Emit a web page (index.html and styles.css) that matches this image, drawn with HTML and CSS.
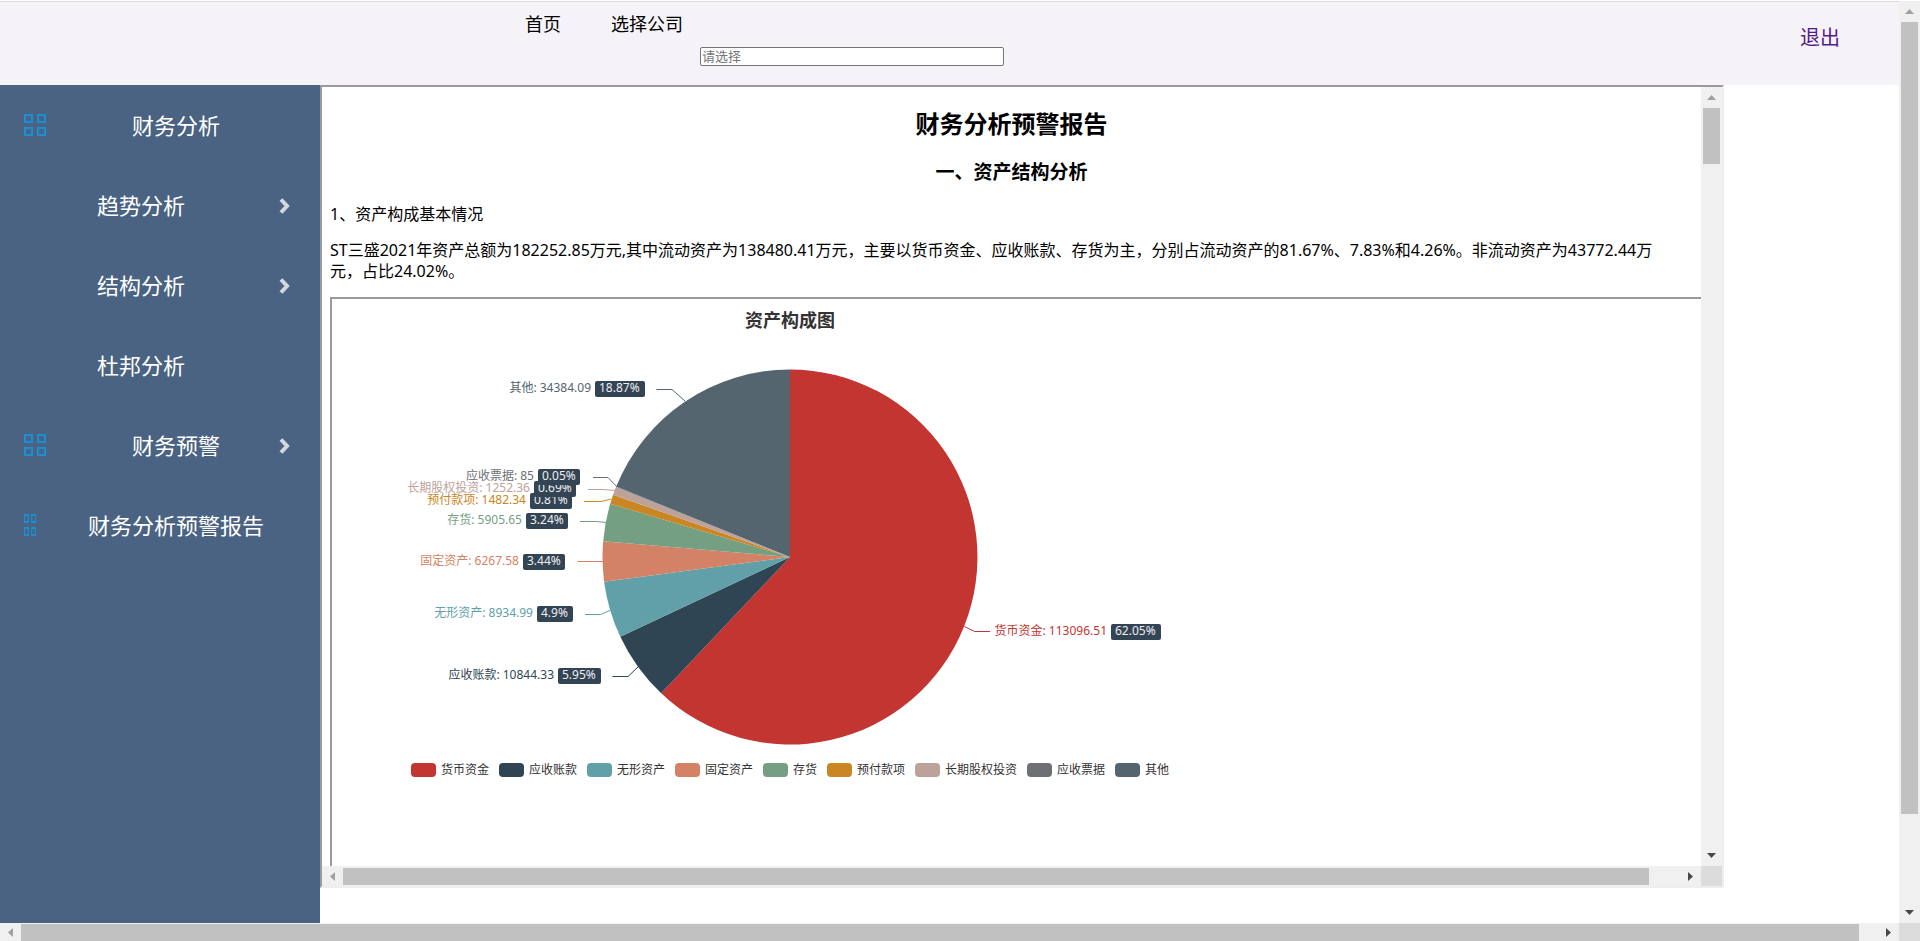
FILE: index.html
```html
<!DOCTYPE html>
<html lang="zh-CN">
<head>
<meta charset="utf-8">
<title>财务分析预警报告</title>
<link rel="stylesheet" href="styles.css">
</head>
<body>
<svg class="defs" aria-hidden="true">
  <symbol id="grid" viewBox="0 0 22 22" preserveAspectRatio="none">
    <path d="M1 1h7v7H1zM14 1h7v7h-7zM1 14h7v7H1zM14 14h7v7h-7z" fill="none" stroke="#1c8fd3" stroke-width="2"/>
  </symbol>
  <symbol id="chevron" viewBox="0 0 11 16">
    <path d="M2 2l6 6.500-6 6.500" fill="none" stroke="#d3d8de" stroke-width="4"/>
  </symbol>
  <symbol id="tri" viewBox="0 0 9 5"><path d="M0 5L4.500 0L9 5z" fill="currentColor"/></symbol>
</svg>
<div class="window">
  <div class="page">
    <header class="header">
      <div class="header-main">
        <nav class="nav"><a href="#home">首页</a><a href="#company">选择公司</a></nav>
        <input class="company" type="text" placeholder="请选择" aria-label="选择公司">
      </div>
      <a class="logout" href="#logout">退出</a>
    </header>
    <div class="body">
      <nav class="sidebar">
        <a class="item" href="#analysis"><svg class="icon"><use href="#grid"/></svg><span class="label">财务分析</span></a>
        <a class="item sub" href="#trend"><span class="label">趋势分析</span><svg class="chevron"><use href="#chevron"/></svg></a>
        <a class="item sub" href="#structure"><span class="label">结构分析</span><svg class="chevron"><use href="#chevron"/></svg></a>
        <a class="item sub" href="#dupont"><span class="label">杜邦分析</span></a>
        <a class="item" href="#warning"><svg class="icon"><use href="#grid"/></svg><span class="label">财务预警</span><svg class="chevron"><use href="#chevron"/></svg></a>
        <a class="item" href="#report"><svg class="icon narrow"><use href="#grid"/></svg><span class="label">财务分析预警报告</span></a>
      </nav>
      <main class="frame">
        <article class="report">
          <h1>财务分析预警报告</h1>
          <h2>一、资产结构分析</h2>
          <p>1、资产构成基本情况</p>
          <p>ST三盛2021年资产总额为182252.85万元,其中流动资产为138480.41万元，主要以货币资金、应收账款、存货为主，分别占流动资产的81.67%、7.83%和4.26%。非流动资产为43772.44万元，占比24.02%。</p>
          <section class="chart-frame">
            <div class="chart">
              <h3>资产构成图</h3>
              <svg class="pie" viewBox="0 0 916 410" role="img" aria-label="资产构成图">
                <path fill="#c23531" d="M458 208V20.500A187.500 187.500 0 1 1 329.200 344.300z"/>
                <path fill="#2f4554" d="M458 208L329.200 344.300A187.500 187.500 0 0 1 288.300 287.800z"/>
                <path fill="#61a0a8" d="M458 208L288.300 287.800A187.500 187.500 0 0 1 272.100 232.700z"/>
                <path fill="#d48265" d="M458 208L272.100 232.700A187.500 187.500 0 0 1 271.200 192.200z"/>
                <path fill="#749f83" d="M458 208L271.200 192.200A187.500 187.500 0 0 1 278.200 154.800z"/>
                <path fill="#ca8622" d="M458 208L278.200 154.800A187.500 187.500 0 0 1 281.100 145.700z"/>
                <path fill="#bda29a" d="M458 208L281.100 145.700A187.500 187.500 0 0 1 284 138.100z"/>
                <path fill="#6e7074" d="M458 208L284 138.100A187.500 187.500 0 0 1 284.200 137.600z"/>
                <path fill="#546570" d="M458 208L284.200 137.600A187.500 187.500 0 0 1 458 20.500z"/>
                <g class="lines">
                  <path stroke="#c23531" d="M632.500 277.500L642.500 282.500H658"/>
                  <path stroke="#2f4554" d="M280.500 327.500H296L306 318"/>
                  <path stroke="#61a0a8" d="M253 265.500H268.500L278 261.500"/>
                  <path stroke="#d48265" d="M245.500 212.500H271"/>
                  <path stroke="#749f83" d="M248 172.500H264L274 173.500"/>
                  <path stroke="#ca8622" d="M252 152.500H269L279 150"/>
                  <path stroke="#bda29a" d="M256 140.500H271L283 141.500"/>
                  <path stroke="#6e7074" d="M261 128.500H276L285 138"/>
                  <path stroke="#546570" d="M324.500 40.500H340L353 52"/>
                </g>
                <g class="badges">
                  <rect x="779" y="275" width="50" height="16" rx="2"/><text x="783" y="286">62.05%</text>
                  <rect x="226" y="319" width="43" height="16" rx="2"/><text x="230" y="330">5.95%</text>
                  <rect x="205" y="257" width="36" height="16" rx="2"/><text x="209" y="268">4.9%</text>
                  <rect x="191" y="205" width="42" height="16" rx="2"/><text x="195" y="216">3.44%</text>
                  <rect x="194" y="164" width="42" height="16" rx="2"/><text x="198" y="175">3.24%</text>
                  <rect x="198" y="144" width="42" height="16" rx="2"/><text x="202" y="155">0.81%</text>
                  <rect x="202" y="132" width="42" height="16" rx="2"/><text x="206" y="143">0.69%</text>
                  <rect x="206" y="120" width="42" height="16" rx="2"/><text x="210" y="131">0.05%</text>
                  <rect x="263" y="32" width="50" height="16" rx="2"/><text x="267" y="43">18.87%</text>
                </g>
                <g class="names">
                  <text fill="#c23531" x="775" y="286">货币资金: 113096.51</text>
                  <text fill="#2f4554" x="222" y="330">应收账款: 10844.33</text>
                  <text fill="#61a0a8" x="201" y="268">无形资产: 8934.99</text>
                  <text fill="#d48265" x="187" y="216">固定资产: 6267.58</text>
                  <text fill="#749f83" x="190" y="175">存货: 5905.65</text>
                  <text fill="#ca8622" x="194" y="155">预付款项: 1482.34</text>
                  <text fill="#bda29a" x="198" y="143">长期股权投资: 1252.36</text>
                  <text fill="#6e7074" x="202" y="131">应收票据: 85</text>
                  <text fill="#546570" x="259" y="43">其他: 34384.09</text>
                </g>
              </svg>
              <ul class="legend">
                <li class="c1">货币资金</li><li class="c2">应收账款</li><li class="c3">无形资产</li><li class="c4">固定资产</li><li class="c5">存货</li><li class="c6">预付款项</li><li class="c7">长期股权投资</li><li class="c8">应收票据</li><li class="c9">其他</li>
              </ul>
            </div>
          </section>
        </article>
        <div class="bar vertical" aria-hidden="true">
          <svg class="arrow"><use href="#tri"/></svg><div class="track"><div class="thumb frame-v"></div></div><svg class="arrow dark down"><use href="#tri"/></svg>
        </div>
        <div class="bar horizontal" aria-hidden="true">
          <svg class="arrow left"><use href="#tri"/></svg><div class="track"><div class="thumb frame-h"></div></div><svg class="arrow dark right"><use href="#tri"/></svg>
        </div>
        <div class="corner"></div>
      </main>
    </div>
  </div>
  <div class="bar vertical" aria-hidden="true">
    <svg class="arrow"><use href="#tri"/></svg><div class="track"><div class="thumb page-v"></div></div><svg class="arrow dark down"><use href="#tri"/></svg>
  </div>
  <div class="bar horizontal" aria-hidden="true">
    <svg class="arrow left"><use href="#tri"/></svg><div class="track"><div class="thumb page-h"></div></div><svg class="arrow dark right"><use href="#tri"/></svg>
  </div>
  <div class="corner"></div>
</div>
</body>
</html>
```
FILE: styles.css
```css
* { box-sizing: border-box; }
body {
  margin: 0;
  font-family: "Noto Sans", "Noto Sans CJK SC", sans-serif;
  font-size: 16px;
  color: #000;
  background: #fff;
}
a { color: inherit; text-decoration: none; }
.defs { position: absolute; width: 0; height: 0; }

.window {
  display: grid;
  grid-template: minmax(0, 1fr) 18px / minmax(0, 1fr) 21px;
  height: 100vh;
  padding-top: 1px;
  overflow: hidden;
}
.page { display: flex; flex-direction: column; min-height: 0; }

.header {
  display: flex;
  justify-content: space-between;
  align-items: flex-start;
  height: 84px;
  border-top: 1px solid #dcdadd;
  background: #f5f3f7;
}
.header-main { padding: 9px 0 0 525px; }
.nav { display: flex; gap: 50px; font-size: 18px; line-height: 26px; }
.company {
  display: block;
  width: 304px;
  height: 19px;
  margin: 10px 0 0 175px;
  padding: 0 1px 2px;
  border: 1px solid #767676;
  border-radius: 2px;
  background: #fff;
  font: 13px/15px "Noto Sans", "Noto Sans CJK SC", sans-serif;
}
.company::placeholder { color: #757575; opacity: 1; }
.logout { margin: 22px 59px 0 0; font-size: 20px; line-height: 28px; color: #551a8b; }

.body { display: flex; flex: 1; min-height: 0; }
.sidebar { flex: 0 0 320px; background: #4a6382; color: #fff; }
.item {
  display: flex;
  align-items: center;
  height: 80px;
  padding: 0 30px 0 24px;
  font-size: 22px;
}
.sub { padding-left: 53px; }
.icon { width: 22px; height: 22px; margin-right: 42px; }
.narrow { width: 12px; margin-right: 52px; }
.label { width: 176px; padding-bottom: 3px; text-align: center; }
.chevron { width: 11px; height: 17px; margin-left: auto; }

.frame {
  display: grid;
  grid-template: minmax(0, 1fr) 20px / minmax(0, 1fr) 21px;
  margin-bottom: 35px;
  border: 2px solid #9a9a9a;
  border-right-color: #eee;
  border-bottom-color: #eee;
  flex: 0 1 1404px;
}
.report {
  display: flex;
  flex-direction: column;
  min-height: 0;
  padding: 21px 8px 0;
  overflow: hidden;
}
.report h1 { margin: 0 0 18px; font-size: 24px; line-height: 32px; text-align: center; }
.report h2 { margin: 0 0 18px; font-size: 19px; line-height: 28px; text-align: center; }
.report p { margin: 0 16px 15px 0; line-height: 21px; }
.chart-frame {
  flex: 1 0 auto;
  margin-right: -40px;
  border: 2px solid #9a9a9a;
  border-bottom: 0;
}
.chart { max-width: 916px; }
.chart h3 { margin: 0; padding: 8px 0 16px; font-size: 18px; line-height: 26px; text-align: center; color: #333; }
.pie { display: block; width: 100%; font-size: 12px; }
.lines { fill: none; stroke-width: 1; }
.badges rect { fill: #334455; }
.badges text { fill: #eee; }
.names { text-anchor: end; }
.legend {
  display: flex;
  justify-content: center;
  gap: 10px;
  margin: 0;
  padding: 0;
  list-style: none;
  font-size: 12px;
  line-height: 22px;
  color: #333;
}
.legend li { display: flex; align-items: center; gap: 5px; white-space: nowrap; }
.legend li::before { content: ""; width: 25px; height: 14px; border-radius: 4px; background: var(--c); }
.c1 { --c: #c23531; }
.c2 { --c: #2f4554; }
.c3 { --c: #61a0a8; }
.c4 { --c: #d48265; }
.c5 { --c: #749f83; }
.c6 { --c: #ca8622; }
.c7 { --c: #bda29a; }
.c8 { --c: #6e7074; }
.c9 { --c: #546570; }

.bar { display: flex; align-items: center; background: #f0f0f0; color: #a0a0a0; min-width: 0; min-height: 0; }
.bar .track { flex: 1; min-width: 0; min-height: 0; }
.vertical { flex-direction: column; padding: 8px 0; gap: 8px; }
.horizontal { padding: 0 6px; gap: 6px; }
.arrow { width: 9px; height: 5px; flex: none; }
.dark { color: #484848; }
.down { transform: rotate(180deg); }
.left { transform: rotate(-90deg); }
.right { transform: rotate(90deg); }
.thumb { width: 17px; height: 17px; background: #c1c1c1; }
.frame-v { height: 7.6%; }
.frame-h { width: 97.7%; }
.page-v { height: 90%; }
.page-h { width: 99%; }
.corner { background: #dcdcdc; }
```
